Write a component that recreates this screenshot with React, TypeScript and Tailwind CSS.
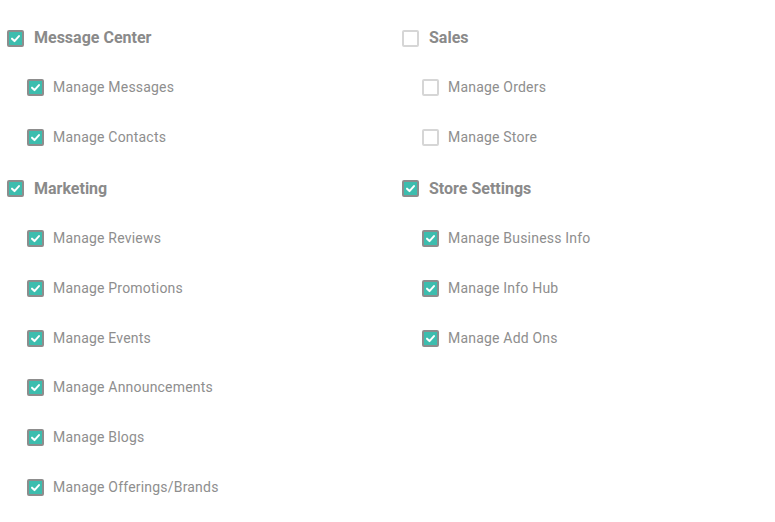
import React from "react";

type Item = { label: string; checked: boolean };
type Group = { title: string; checked: boolean; items: Item[] };

const left: Group[] = [
  {
    title: "Message Center",
    checked: true,
    items: [
      { label: "Manage Messages", checked: true },
      { label: "Manage Contacts", checked: true },
    ],
  },
  {
    title: "Marketing",
    checked: true,
    items: [
      { label: "Manage Reviews", checked: true },
      { label: "Manage Promotions", checked: true },
      { label: "Manage Events", checked: true },
      { label: "Manage Announcements", checked: true },
      { label: "Manage Blogs", checked: true },
      { label: "Manage Offerings/Brands", checked: true },
    ],
  },
];

const right: Group[] = [
  {
    title: "Sales",
    checked: false,
    items: [
      { label: "Manage Orders", checked: false },
      { label: "Manage Store", checked: false },
    ],
  },
  {
    title: "Store Settings",
    checked: true,
    items: [
      { label: "Manage Business Info", checked: true },
      { label: "Manage Info Hub", checked: true },
      { label: "Manage Add Ons", checked: true },
    ],
  },
];

function Box({ checked }: { checked: boolean }) {
  if (checked) {
    return (
      <span className="flex h-[17px] w-[17px] shrink-0 items-center justify-center rounded-[2px] border-2 border-[#8d8d8d] bg-[#3dbdae]">
        <svg width="11" height="11" viewBox="0 0 12 12" fill="none">
          <path d="M2.2 6.2 L4.9 8.8 L9.8 3.4" stroke="#fff" strokeWidth="2.2" strokeLinecap="round" strokeLinejoin="round" />
        </svg>
      </span>
    );
  }
  return <span className="block h-[17px] w-[17px] shrink-0 rounded-[2px] border-2 border-[#d6d6d6] bg-white" />;
}

function Column({ groups }: { groups: Group[] }) {
  return (
    <div className="flex w-[395px] shrink-0 flex-col gap-[1px]">
      {groups.map((g) => (
        <div key={g.title} className="flex flex-col">
          <div className="flex h-[50px] items-center gap-[10px]">
            <Box checked={g.checked} />
            <span className="text-[16px] font-bold text-[#8a8a8a]">{g.title}</span>
          </div>
          {g.items.map((it) => (
            <div key={it.label} className="flex h-[49.8px] items-center gap-[9px] pl-[20px]">
              <Box checked={it.checked} />
              <span className="text-[14px] tracking-[0.2px] text-[#8e8e8e]">{it.label}</span>
            </div>
          ))}
        </div>
      ))}
    </div>
  );
}

export default function App() {
  return (
    <div
      className="flex h-[522px] w-[775px] overflow-hidden bg-white pl-[7px] pt-[13px]"
      style={{ fontFamily: "Roboto, 'Liberation Sans', sans-serif" }}
    >
      <Column groups={left} />
      <Column groups={right} />
    </div>
  );
}
